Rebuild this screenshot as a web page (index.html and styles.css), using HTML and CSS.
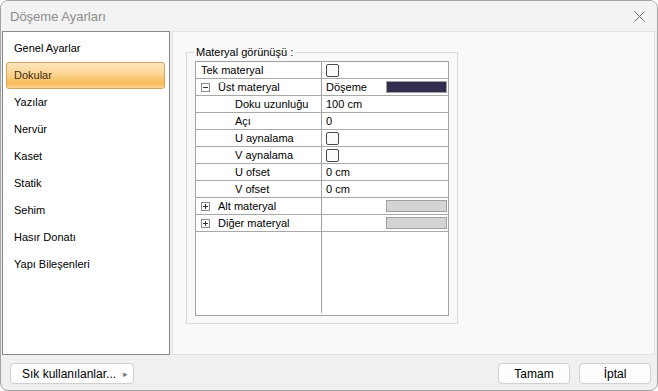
FILE: index.html
```html
<!DOCTYPE html>
<html>
<head>
    <link rel="stylesheet" href="styles.css">
    <title>Döşeme Ayarları</title>
</head>
<body>
    <div class="window">
        <div class="titlebar">
            <span class="title">Döşeme Ayarları</span>
            <svg class="close" width="11" height="11" viewBox="0 0 11 11">
                <path d="M0.5 0.5 L10.5 10.5 M10.5 0.5 L0.5 10.5" stroke="#6a6a6a" stroke-width="1" fill="none"/>
            </svg>
        </div>

        <div class="main">
            <!-- Left menu -->
            <div class="sidebar">
                <div class="menu-item">Genel Ayarlar</div>
                <div class="menu-item selected">Dokular</div>
                <div class="menu-item">Yazılar</div>
                <div class="menu-item">Nervür</div>
                <div class="menu-item">Kaset</div>
                <div class="menu-item">Statik</div>
                <div class="menu-item">Sehim</div>
                <div class="menu-item">Hasır Donatı</div>
                <div class="menu-item">Yapı Bileşenleri</div>
            </div>

            <!-- Page content -->
            <div class="panel">
                <fieldset class="group">
                    <legend>Materyal görünüşü :</legend>
                    <div class="grid">
                        <div class="row">
                            <div class="cell name">Tek materyal</div>
                            <div class="cell value"><span class="check"></span></div>
                        </div>
                        <div class="row">
                            <div class="cell name">
                                <svg class="toggle" width="9" height="9" viewBox="0 0 9 9"><rect x="0.5" y="0.5" width="8" height="8" fill="#fff" stroke="#8a8a8a"/><path d="M2 4.5 H7" stroke="#333"/></svg>
                                <span class="group-label">Üst materyal</span>
                            </div>
                            <div class="cell value">Döşeme<span class="swatch dark"></span></div>
                        </div>
                        <div class="row">
                            <div class="cell name sub">Doku uzunluğu</div>
                            <div class="cell value">100 cm</div>
                        </div>
                        <div class="row">
                            <div class="cell name sub">Açı</div>
                            <div class="cell value">0</div>
                        </div>
                        <div class="row">
                            <div class="cell name sub">U aynalama</div>
                            <div class="cell value"><span class="check"></span></div>
                        </div>
                        <div class="row">
                            <div class="cell name sub">V aynalama</div>
                            <div class="cell value"><span class="check"></span></div>
                        </div>
                        <div class="row">
                            <div class="cell name sub">U ofset</div>
                            <div class="cell value">0 cm</div>
                        </div>
                        <div class="row">
                            <div class="cell name sub">V ofset</div>
                            <div class="cell value">0 cm</div>
                        </div>
                        <div class="row">
                            <div class="cell name">
                                <svg class="toggle" width="9" height="9" viewBox="0 0 9 9"><rect x="0.5" y="0.5" width="8" height="8" fill="#fff" stroke="#8a8a8a"/><path d="M2 4.5 H7 M4.5 2 V7" stroke="#333"/></svg>
                                <span class="group-label">Alt materyal</span>
                            </div>
                            <div class="cell value"><span class="swatch light"></span></div>
                        </div>
                        <div class="row">
                            <div class="cell name">
                                <svg class="toggle" width="9" height="9" viewBox="0 0 9 9"><rect x="0.5" y="0.5" width="8" height="8" fill="#fff" stroke="#8a8a8a"/><path d="M2 4.5 H7 M4.5 2 V7" stroke="#333"/></svg>
                                <span class="group-label">Diğer materyal</span>
                            </div>
                            <div class="cell value"><span class="swatch light"></span></div>
                        </div>
                        <div class="row filler">
                            <div class="cell name"></div>
                            <div class="cell value"></div>
                        </div>
                    </div>
                </fieldset>
            </div>
        </div>

        <!-- Bottom buttons -->
        <div class="footer">
            <button class="btn favorites">Sık kullanılanlar...<span class="arrow">&#9656;</span></button>
            <div class="footer-right">
                <button class="btn">Tamam</button>
                <button class="btn">İptal</button>
            </div>
        </div>
    </div>
</body>
</html>
```

FILE: styles.css
```css
body {
    margin: 0;
    padding: 0;
    background-color: #ffffff;
    font-family: 'Liberation Sans', Arial, sans-serif;
    color: #000000;
}

/* Dialog frame */
.window {
    width: 658px;
    height: 391px;
    box-sizing: border-box;
    border: 1px solid #a3a3a3;
    border-radius: 8px;
    background-color: #f0f0f0;
    display: flex;
    flex-direction: column;
    overflow: hidden;
}

.titlebar {
    height: 30px;
    flex-shrink: 0;
    background-color: #f3f3f3;
    display: flex;
    align-items: center;
    justify-content: space-between;
    padding: 0 12px 0 9px;
}

.title {
    font-size: 13px;
    color: #8c8c8c;
}

.close {
    display: block;
}

/* Middle area */
.main {
    height: 324px;
    flex-shrink: 0;
    display: flex;
    padding: 0 2px 0 1px;
    gap: 2px;
}

/* Left menu */
.sidebar {
    width: 166px;
    background-color: #ffffff;
    border: 1px solid #84878d;
    padding-top: 3px;
}

.menu-item {
    height: 27px;
    line-height: 27px;
    font-size: 11px;
    padding-left: 11px;
    color: #000000;
}

.menu-item.selected {
    margin: 0 4px 0 3px;
    padding-left: 7px;
    height: 25px;
    line-height: 25px;
    border: 1px solid #d3a45c;
    border-radius: 3px;
    background: linear-gradient(#fde6bd 0%, #fcd592 45%, #f9bb58 80%, #fcd391 100%);
    color: #3b2a12;
}

/* Content panel */
.panel {
    flex: 1;
    background-color: #f9f9f9;
    border: 1px solid #e4e4e4;
    padding: 14px 0 0 13px;
}

.group {
    width: 254px;
    height: 273px;
    margin: 0;
    padding: 3px 8px 0 8px;
    border: 1px solid #dadada;
    box-sizing: content-box;
}

.group legend {
    font-size: 11px;
    padding: 0 2px;
    margin-left: -1px;
    color: #000000;
}

/* Property grid */
.grid {
    height: 255px;
    box-sizing: border-box;
    border: 1px solid #a2a2a2;
    background-color: #ffffff;
    display: flex;
    flex-direction: column;
}

.row {
    height: 17px;
    flex-shrink: 0;
    display: flex;
    border-bottom: 1px solid #a9a9a9;
    box-sizing: border-box;
}

.row.filler {
    flex: 1;
    border-bottom: none;
    padding-bottom: 2px;
}

.cell {
    font-size: 11px;
    line-height: 16px;
    display: flex;
    align-items: center;
}

.cell.name {
    width: 126px;
    border-right: 1px solid #a2a2a2;
    padding-left: 5px;
    box-sizing: border-box;
}

.cell.name.sub {
    padding-left: 39px;
}

.cell.value {
    flex: 1;
    padding-left: 4px;
    padding-right: 1px;
}

.toggle {
    display: block;
    margin-right: 8px;
}

.check {
    width: 11px;
    height: 11px;
    border: 1px solid #4a4a4a;
    border-radius: 2px;
    background-color: #fbfbfb;
}

.swatch {
    width: 59px;
    height: 10px;
    margin-left: auto;
    border: 1px solid #a0a0a0;
}

.swatch.dark {
    background-color: #322d4f;
}

.swatch.light {
    background-color: #d4d4d4;
}

/* Bottom buttons */
.footer {
    flex: 1;
    display: flex;
    align-items: flex-start;
    justify-content: space-between;
    padding: 8px 6px 0 9px;
}

.footer-right {
    display: flex;
    gap: 9px;
}

.btn {
    width: 72px;
    height: 21px;
    padding: 0;
    font-family: 'Liberation Sans', Arial, sans-serif;
    font-size: 12px;
    color: #000000;
    background-color: #fdfdfd;
    border: 1px solid #d0d0d0;
    border-radius: 4px;
}

.btn.favorites {
    width: 124px;
    text-align: left;
    padding-left: 11px;
    display: flex;
    align-items: center;
}

.arrow {
    margin-left: auto;
    margin-right: 5px;
    font-size: 9px;
    color: #7a7a7a;
}
```
